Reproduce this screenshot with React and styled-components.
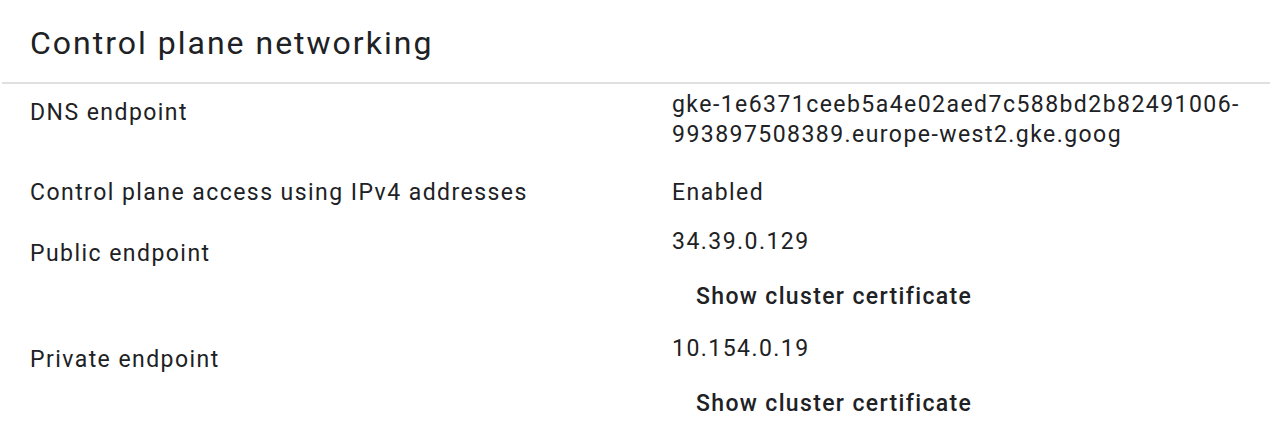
import React from 'react'
import styled, {createGlobalStyle} from "styled-components";

const GlobalStyle = createGlobalStyle`
    body {
        margin: 0;
        background: #ffffff;
        font-family: Roboto, "Noto Sans", Arial, sans-serif;
        color: #202124;
    }
`;

const rows = [
    {
        label: "DNS endpoint",
        value: "gke-1e6371ceeb5a4e02aed7c588bd2b82491006-993897508389.europe-west2.gke.goog",
        gap: 6,
        offset: 8,
    },
    {label: "Control plane access using IPv4 addresses", value: "Enabled", gap: 28, offset: 0},
    {label: "Public endpoint", value: "34.39.0.129", gap: 19, offset: 12, certificate: true},
    {label: "Private endpoint", value: "10.154.0.19", gap: 10, offset: 11, certificate: true},
];

const App = () => {
    return (
        <>
            <GlobalStyle/>
            <Panel>
                <Header>
                    <Title>Control plane networking</Title>
                </Header>
                <List>
                    {rows.map((row) => (
                        <Row key={row.label} $gap={row.gap}>
                            <Label $offset={row.offset}>{row.label}</Label>
                            <Value>
                                <span>{row.value}</span>
                                {row.certificate && <TextButton type="button">Show cluster certificate</TextButton>}
                            </Value>
                        </Row>
                    ))}
                </List>
            </Panel>
        </>
    );
};

const Panel = styled.section`
    width: 1270px;
    height: 432px;
    overflow: hidden;
`;

const Header = styled.header`
    margin-left: 2px;
    padding: 19px 0 15px 28px;
    border-bottom: 2px solid #e0e0e0;
`;

const Title = styled.h2`
    margin: 0;
    font-size: 32px;
    line-height: 48px;
    font-weight: 400;
    letter-spacing: 2px;
    color: #202124;
`;

const List = styled.div`
    display: flex;
    flex-direction: column;
    padding-left: 30px;
`;

const Row = styled.div`
    display: grid;
    grid-template-columns: 642px 598px;
    align-items: start;
    margin-top: ${(p) => p.$gap}px;
    font-size: 23px;
    line-height: 30px;
    letter-spacing: 1.45px;
`;

const Label = styled.div`
    padding-top: ${(p) => p.$offset}px;
`;

const Value = styled.div`
    display: flex;
    flex-direction: column;
    align-items: flex-start;
`;

const TextButton = styled.button`
    margin-top: 13px;
    height: 54px;
    padding: 0 24px;
    border: none;
    background: transparent;
    font-family: Roboto, "Noto Sans", Arial, sans-serif;
    font-size: 23px;
    font-weight: 500;
    line-height: 54px;
    letter-spacing: 1.35px;
    color: #202124;
    cursor: pointer;
`;

export default App
